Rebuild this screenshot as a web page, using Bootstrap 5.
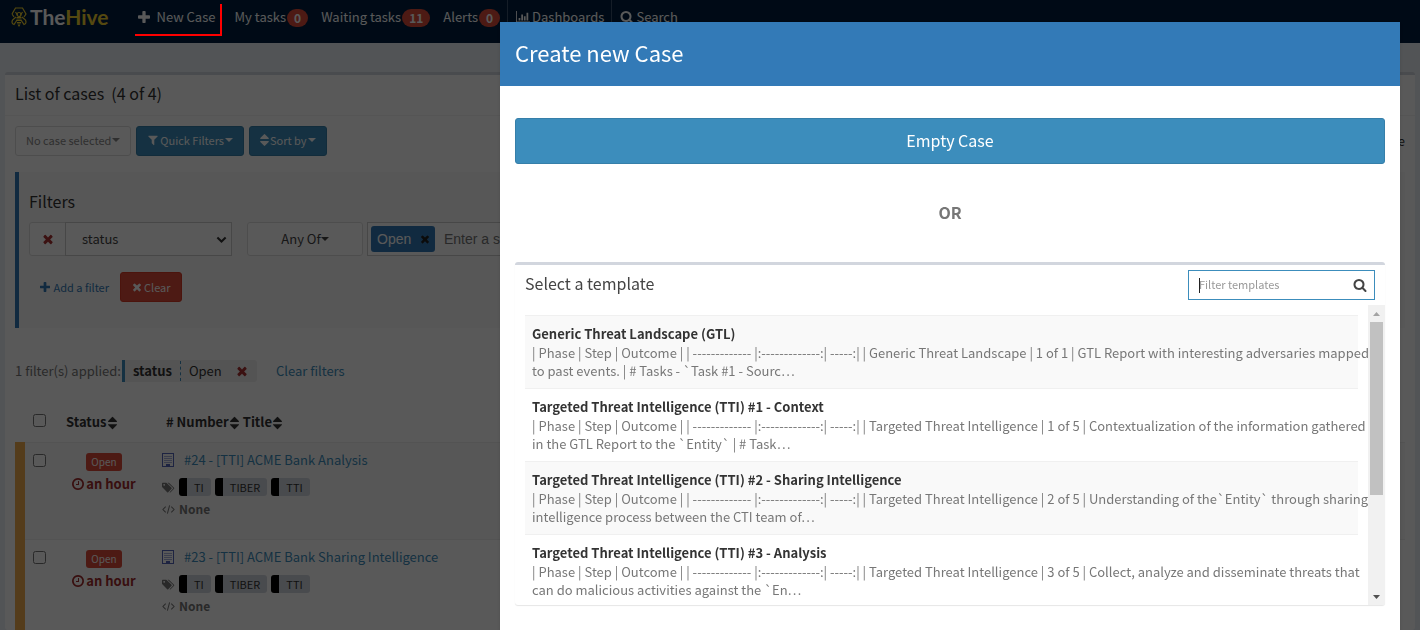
<!DOCTYPE html>
<html lang="en">
<head>
<meta charset="utf-8">
<meta name="viewport" content="width=device-width, initial-scale=1">
<title>TheHive</title>
<link rel="stylesheet" href="https://cdn.jsdelivr.net/npm/bootstrap@5.3.0/dist/css/bootstrap.min.css">
<style>
:root { --hive-blue: #3c8dbc; --hive-red: #dd4b39; --hive-grey: #d2d6de; }
body { font-family: "Noto Sans CJK SC", "Liberation Sans", sans-serif; font-size: 13px; line-height: 20px; color: #333; background: #ecf0f5; height: 100vh; overflow: hidden; }
a { text-decoration: none; color: var(--hive-blue); }
.ico { width: 14px; height: 14px; fill: currentColor; flex: none; }
.ico-s { width: 12px; height: 12px; }
.ico-sort { width: 9px; margin-left: 1px; }
.caret { width: 0; height: 0; border: 4px solid transparent; border-top-color: currentColor; border-bottom: 0; flex: none; }

/* top bar */
.topbar { height: 43px; background: #001f3f; padding: 0 10px; color: #fff; flex: none; }
.topbar a { color: #fff; height: 33px; gap: 1px; margin-left: 13px; }
.topbar a.brand { margin-left: 0; gap: 2px; }
.bee { width: 18px; height: 20px; color: #f3d12f; }
.logo-text { font: 700 21px/24px Lato, sans-serif; color: #fff; }
.logo-text span { color: #f3d12f; }
.count { background: var(--hive-red); border-radius: 10px; font-size: 12px; font-weight: 700; line-height: 18px; padding: 0 7px; margin-top: 2px; }
.topbar a.new-case { position: relative; width: 87px; gap: 7px; padding-left: 3px; margin-left: 26px; }
.new-case::after { content: ""; position: absolute; inset: 4px 0 -3px 0; border: solid #f00; border-width: 0 2px 2px 0; z-index: 1060; }
.topbar a.divided { border-left: 1px solid #3c5570; padding-left: 8px; margin-left: 7px; gap: 2px; }

/* list of cases */
.panel-box { background: #fff; border-top: 3px solid var(--hive-grey); border-radius: 3px; }
.heading { font-size: 16px; line-height: 24px; font-weight: 400; margin: 0; }
.list-box { margin: 29px 5px 0; flex: 1; min-height: 0; overflow: hidden; }
.list-head { padding: 6px 10px 10px; border-bottom: 1px solid #f4f4f4; }
.list-body { padding: 10px; }
.toolbar { gap: 5px; }
.tool { font-size: 11px; line-height: 18px; padding: 5px 10px; border-radius: 3px; gap: 1px; border: 1px solid #367fa9; color: #fff; background: var(--hive-blue); }
.toolbar .tool { padding: 4px 10px 6px; }
.tool-idle { background: #fff; border-color: #ddd; color: #888; }
.toolbar .tool-idle { background: #fff; border-color: #ddd; }
.tool-danger { background: var(--hive-red); border-color: #d73925; }
.tool-link { color: #337ab7; background: none; border-color: transparent; }
.filters { border-left: 4px solid #337ab7; background: #f9f9f9; padding: 17px 10px 26px; margin-top: 16px; }
.filter-row { margin-top: 9px; height: 34px; }
.cell { border: 1px solid #ddd; background: #fff; height: 34px; }
.cross { color: #a33; }
.remove { width: 37px; border-radius: 3px 0 0 3px; }
.field { width: 167px; margin-left: -1px; border: 1px solid #ccc; border-radius: 0; padding: 0 30px 0 16px; font-size: 13px; color: #444; background-color: #fff; background-position: right 4px center; background-size: 11px; background-image: url("data:image/svg+xml,%3csvg xmlns='http://www.w3.org/2000/svg' viewBox='0 0 16 16'%3e%3cpath fill='none' stroke='%23333' stroke-width='3' d='M2 5l6 6 6-6'/%3e%3c/svg%3e"); }
.match { width: 116px; margin-left: 15px; border-radius: 3px; font-size: 13px; color: #444; }
.tag-box { margin-left: 4px; flex: 1; border-color: #ccc; padding: 3px; gap: 9px; font-family: "Liberation Sans", sans-serif; font-size: 14px; }
.tag-open { background: #337ab7; color: #fff; border-radius: 3px; padding: 0 4px 0 6px; height: 26px; width: 64px; }
.tag-open .ico { width: 12px; color: #222; }
.tag-box input { border: 0; width: 160px; background: none; padding: 0; }
.applied { margin-top: 32px; height: 22px; color: #777; }
.chip { background: #f0f0f0; border-left: 3px solid var(--hive-blue); border-radius: 0 3px 3px 0; height: 22px; width: 135px; margin: 0 19px 0 1px; color: #333; }
.chip b { padding: 0 8px; border-right: 1px dashed var(--hive-blue); }
.cases { margin: 22px 0 0; font-size: 13px; --bs-table-striped-bg: #f9f9f9; --bs-table-color: #333; }
.cases th, .cases td { padding: 7px 8px 20px; border-bottom: 1px solid #eee; }
.cases th { padding: 8px 8px 10px; line-height: 20px; }
.cases td:last-child { padding-left: 12px; }
.cases th:last-child { padding-left: 16px; }
.cases tbody td:first-child { border-left: 10px solid #f0ad4e; }
.cases input { width: 13px; height: 13px; display: block; margin: 4px 0 0; }
.cases thead input { margin: 0 0 5px 5px; }
.c-check { width: 38px; } .c-status { width: 92px; }
.status { background: var(--hive-red); color: #fff; font-size: 10px; line-height: 18px; border-radius: 3px; padding: 0 5px; margin-top: 3px; }
.age { color: #a22c2c; font-weight: 700; gap: 2px; line-height: 20px; margin-top: 3px; white-space: nowrap; }
.case-title { gap: 10px; }
.building { width: 12px; color: #5566bb; }
.case-tag { background: var(--hive-grey); border-left: 8px solid #000; border-radius: 3px; font-size: 11px; line-height: 18px; padding: 0 7px; color: #333; }
.meta { color: #777; gap: 4px; font-size: 12px; margin-top: 3px; }
.meta .ico { width: 13px; height: 13px; }
.tag-row { margin-top: 8px; }

/* dialog */
.backdrop { background: #000; opacity: .65; z-index: 1050; }
.sheet { position: absolute; top: 22px; right: 20px; bottom: 0; width: 900px; max-width: 95vw; background: #fff; z-index: 1055; box-shadow: 0 2px 3px rgba(0,0,0,.12); }
.sheet-head { background: #337ab7; color: #fff; padding: 18px 15px 22px; }
.sheet-head h4 { font-size: 22px; line-height: 24px; margin: 0; font-weight: 400; }
.sheet-body { padding: 32px 15px 0; }
.empty-case { background: var(--hive-blue); border: 1px solid #367fa9; color: #fff; border-radius: 3px; font-size: 16px; line-height: 24px; padding: 9px 10px 11px; }
.or { font-size: 16px; line-height: 24px; font-weight: 700; color: #777; margin: 36px 0 38px; }
.tpl-box { box-shadow: 0 1px 1px rgba(0,0,0,.1); }
.tpl-head { height: 40px; padding: 0 10px; color: #444; }
.tpl-head .heading { padding-bottom: 4px; }
.tpl-search { width: 187px; height: 30px; border: 1px solid var(--hive-blue); padding: 0 7px 0 10px; }
.tpl-search input { border: 0; outline: 0; padding: 0 0 2px; font-size: 11px; line-height: 18px; min-width: 0; flex: 1; }
.tpl-search input::placeholder { color: #999; }
.cursor { width: 1px; height: 15px; background: #222; margin-right: -1px; z-index: 1; }
.tpl-scroll { height: 300px; overflow: hidden; }
.tpl-list { padding: 10px 10px 0; min-width: 0; }
.tpl { border-top: 1px solid #f0f0f0; padding: 8px 7px; line-height: 18px; color: #777; white-space: nowrap; }
.tpl:nth-child(odd) { background: #f9f9f9; }
.tpl b { display: block; line-height: 19px; margin-bottom: 1px; color: #333; }
.rail { width: 17px; background: #f1f1f1; }
.rail i { width: 13px; height: 173px; background: #c1c1c1; }
.rail svg { width: 17px; height: 17px; }
</style>
</head>
<body class="d-flex flex-column">
<svg class="d-none" xmlns="http://www.w3.org/2000/svg">
  <symbol id="plus" viewBox="192 128 1408 1408"><path d="M1600 736v192q0 40-28 68t-68 28h-416v416q0 40-28 68t-68 28h-192q-40 0-68-28t-28-68v-416h-416q-40 0-68-28t-28-68v-192q0-40 28-68t68-28h416v-416q0-40 28-68t68-28h192q40 0 68 28t28 68v416h416q40 0 68 28t28 68z"/></symbol>
  <symbol id="times" viewBox="0 0 1792 1792"><path d="M1490 1322q0 40-28 68l-136 136q-28 28-68 28t-68-28l-294-294-294 294q-28 28-68 28t-68-28l-136-136q-28-28-28-68t28-68l294-294-294-294q-28-28-28-68t28-68l136-136q28-28 68-28t68 28l294 294 294-294q28-28 68-28t68 28l136 136q28 28 28 68t-28 68l-294 294 294 294q28 28 28 68z"/></symbol>
  <symbol id="search" viewBox="0 0 1792 1792"><path d="M1216 832q0-185-131.5-316.5t-316.5-131.5-316.5 131.5-131.5 316.5 131.5 316.5 316.5 131.5 316.5-131.5 131.5-316.5zm512 832q0 52-38 90t-90 38q-54 0-90-38l-343-342q-179 124-399 124-143 0-273.5-55.5t-225-150-150-225-55.5-273.5 55.5-273.5 150-225 225-150 273.5-55.5 273.5 55.5 225 150 150 225 55.5 273.5q0 220-124 399l343 343q37 37 37 90z"/></symbol>
  <symbol id="filter" viewBox="0 0 1792 1792"><path d="M1595 295q17 41-14 70l-493 493v742q0 42-39 59-13 5-25 5-27 0-45-19l-256-256q-19-19-19-45v-486l-493-493q-31-29-14-70 17-39 59-39h1280q42 0 59 39z"/></symbol>
  <symbol id="sort" viewBox="384 192 1024 1408"><path d="M1408 1088q0 26-19 45l-448 448q-19 19-45 19t-45-19l-448-448q-19-19-19-45t19-45 45-19h896q26 0 45 19t19 45zm0-384q0 26-19 45t-45 19h-896q-26 0-45-19t-19-45 19-45l448-448q19-19 45-19t45 19l448 448q19 19 19 45z"/></symbol>
  <symbol id="clock" viewBox="128 128 1536 1536"><path d="M1024 544v448q0 14-9 23t-23 9h-320q-14 0-23-9t-9-23v-64q0-14 9-23t23-9h224v-352q0-14 9-23t23-9h64q14 0 23 9t9 23zm416 352q0-148-73-273t-198-198-273-73-273 73-198 198-73 273 73 273 198 198 273 73 273-73 198-198 73-273zm224 0q0 209-103 385.5t-279.5 279.5-385.5 103-385.5-103-279.5-279.5-103-385.5 103-385.5 279.5-279.5 385.5-103 385.5 103 279.5 279.5 103 385.5z"/></symbol>
  <symbol id="chart" viewBox="0 0 16 14"><path d="M0 0h1v12h15v1H0zM3 8h2v3H3zM6 4h2v7H6zM9 6h2v5H9zM12 2h2v9h-2z"/></symbol>
  <symbol id="building" viewBox="0 0 12 14"><path fill-rule="evenodd" d="M0 0h12v14H0zM1 1v12h3v-2h4v2h3V1z"/><path d="M2.500 3.500h7M2.500 5.500h7M2.500 7.500h7M2.500 9.500h7" stroke="currentColor" stroke-dasharray="1 1"/></symbol>
  <symbol id="tags" viewBox="0 0 14 12"><path fill-rule="evenodd" d="M0 1.500Q0 1 .6 1H4.500Q5 1 5.600 1.600L10.300 6.300Q10.800 6.900 10.300 7.400L6.700 11Q6.100 11.500 5.600 11L.6 6Q0 5.400 0 4.800zM2.300 2.300a.9.9 0 1 0 .01 0z"/><path d="M6 1h1.200Q7.800 1 8.300 1.600L13 6.300Q13.500 6.900 13 7.400L9.300 11.200Q8.700 11.600 8.200 11L12 7.100Q12.300 6.800 12 6.500z"/></symbol>
  <symbol id="code" viewBox="0 0 14 12"><path d="M4 3L1 6l3 3M10 3l3 3-3 3M8.200 1.500L5.800 10.500" fill="none" stroke="currentColor" stroke-width="1.100"/></symbol>
  <symbol id="bee" viewBox="0 0 16 20"><g fill="none" stroke="currentColor" stroke-width="1.200"><path d="M1 7L4.500 1h7L15 7l-2 3M1 7l2 3M6.500 8L4.500 5M9.500 8l2-3M5 10L1.500 13q-1.500 3.500 1.500 4.500L6 13M11 10l3.500 3q1.500 3.500-1.500 4.500L10 13"/><circle cx="8" cy="7.500" r="2"/></g><path d="M5.500 10h5v1.500h-5zM5.500 12.500h5V14h-5zM5.800 15h4.400l-.4 1.500H6.200zM6.500 17.500h3L8 20z"/></symbol>
</svg>

<nav class="topbar d-flex align-items-start" aria-label="Main">
  <a class="brand d-flex align-items-center" href="#"><svg class="bee ico"><use href="#bee"/></svg><span class="logo-text">The<span>Hive</span></span></a>
  <a class="new-case d-flex align-items-center" href="#"><svg class="ico ico-s"><use href="#plus"/></svg>New Case</a>
  <a class="d-flex align-items-center" href="#">My tasks <span class="count">0</span></a>
  <a class="d-flex align-items-center" href="#">Waiting tasks <span class="count">11</span></a>
  <a class="d-flex align-items-center" href="#">Alerts <span class="count">0</span></a>
  <a class="divided d-flex align-items-center" href="#"><svg class="ico"><use href="#chart"/></svg>Dashboards</a>
  <a class="divided d-flex align-items-center" href="#"><svg class="ico"><use href="#search"/></svg>Search</a>
</nav>

<main class="list-box panel-box">
  <div class="list-head"><h3 class="heading">List of cases &nbsp;(4 of 4)</h3></div>
  <div class="list-body">
    <div class="toolbar d-flex align-items-center">
      <button class="tool tool-idle d-flex align-items-center" disabled>No case selected <span class="caret"></span></button>
      <button class="tool d-flex align-items-center"><svg class="ico ico-s"><use href="#filter"/></svg>Quick Filters<span class="caret"></span></button>
      <button class="tool d-flex align-items-center"><svg class="ico ico-s ico-sort m-0"><use href="#sort"/></svg>Sort by <span class="caret"></span></button>
      <span class="ms-auto">per page</span>
    </div>
    <section class="filters">
      <h4 class="heading">Filters</h4>
      <div class="filter-row d-flex">
        <button class="cell remove cross d-flex align-items-center justify-content-center" aria-label="Remove filter"><svg class="ico"><use href="#times"/></svg></button>
        <select class="form-select field" aria-label="Field"><option>status</option></select>
        <button class="cell match d-flex align-items-center justify-content-center">Any Of<span class="caret"></span></button>
        <div class="cell tag-box d-flex align-items-center"><span class="tag-open d-flex align-items-center justify-content-between">Open <svg class="ico"><use href="#times"/></svg></span><input type="text" placeholder="Enter a status" aria-label="Status"></div>
      </div>
      <div class="d-flex align-items-center mt-3">
        <a href="#" class="tool tool-link d-flex align-items-center"><svg class="ico" style="width:10px"><use href="#plus"/></svg>&nbsp;Add a filter</a>
        <button class="tool tool-danger d-flex align-items-center"><svg class="ico ico-s"><use href="#times"/></svg>Clear</button>
      </div>
    </section>
    <div class="applied d-flex align-items-center">1 filter(s) applied:
      <span class="chip d-flex align-items-center"><b>status</b><span class="ps-2">Open</span><svg class="ico cross ms-auto me-2"><use href="#times"/></svg></span>
      <a href="#">Clear filters</a></div>
    <table class="cases table table-striped">
      <thead><tr><th class="c-check"><input type="checkbox" aria-label="Select all"></th><th class="c-status">Status<svg class="ico ico-sort"><use href="#sort"/></svg></th><th># Number<svg class="ico ico-sort me-1"><use href="#sort"/></svg>Title<svg class="ico ico-sort"><use href="#sort"/></svg></th></tr></thead>
      <tbody>
        <tr><td><input type="checkbox" aria-label="Select case 24"></td>
          <td><div class="d-flex flex-column align-items-center"><span class="status">Open</span><span class="age d-flex align-items-center"><svg class="ico ico-s"><use href="#clock"/></svg>an hour</span></div></td>
          <td><div class="case-title d-flex align-items-center"><svg class="ico building"><use href="#building"/></svg><a href="#">#24 - [TTI] ACME Bank Analysis</a></div>
            <div class="meta tag-row d-flex align-items-center"><svg class="ico"><use href="#tags"/></svg><span class="case-tag">TI</span><span class="case-tag">TIBER</span><span class="case-tag">TTI</span></div>
            <div class="meta d-flex align-items-center"><svg class="ico"><use href="#code"/></svg><b>None</b></div></td></tr>
        <tr><td><input type="checkbox" aria-label="Select case 23"></td>
          <td><div class="d-flex flex-column align-items-center"><span class="status">Open</span><span class="age d-flex align-items-center"><svg class="ico ico-s"><use href="#clock"/></svg>an hour</span></div></td>
          <td><div class="case-title d-flex align-items-center"><svg class="ico building"><use href="#building"/></svg><a href="#">#23 - [TTI] ACME Bank Sharing Intelligence</a></div>
            <div class="meta tag-row d-flex align-items-center"><svg class="ico"><use href="#tags"/></svg><span class="case-tag">TI</span><span class="case-tag">TIBER</span><span class="case-tag">TTI</span></div>
            <div class="meta d-flex align-items-center"><svg class="ico"><use href="#code"/></svg><b>None</b></div></td></tr>
      </tbody>
    </table>
  </div>
</main>

<div class="backdrop position-fixed top-0 start-0 w-100 h-100"></div>
<div class="sheet" role="dialog" aria-labelledby="dlgTitle">
  <header class="sheet-head"><h4 id="dlgTitle">Create new Case</h4></header>
  <div class="sheet-body">
    <button class="empty-case w-100 d-block">Empty Case</button>
    <p class="or text-center">OR</p>
    <section class="panel-box tpl-box">
      <div class="tpl-head d-flex align-items-center justify-content-between">
        <h3 class="heading">Select a template</h3>
        <label class="tpl-search d-flex align-items-center"><span class="cursor"></span><input type="text" placeholder="Filter templates" aria-label="Filter templates"><svg class="ico"><use href="#search"/></svg></label>
      </div>
      <div class="tpl-scroll d-flex">
        <div class="tpl-list flex-fill">
          <div class="tpl"><b>Generic Threat Landscape (GTL)</b>| Phase | Step | Outcome | | ------------- |:-------------:| -----:| | Generic Threat Landscape | 1 of 1 | GTL Report with interesting adversaries mapped<br>to past events. | # Tasks - `Task #1 - Sourc…</div>
          <div class="tpl"><b>Targeted Threat Intelligence (TTI) #1 - Context</b>| Phase | Step | Outcome | | ------------- |:-------------:| -----:| | Targeted Threat Intelligence | 1 of 5 | Contextualization of the information gathered<br>in the GTL Report to the `Entity` | # Task…</div>
          <div class="tpl"><b>Targeted Threat Intelligence (TTI) #2 - Sharing Intelligence</b>| Phase | Step | Outcome | | ------------- |:-------------:| -----:| | Targeted Threat Intelligence | 2 of 5 | Understanding of the`Entity` through sharing<br>intelligence process between the CTI team of…</div>
          <div class="tpl"><b>Targeted Threat Intelligence (TTI) #3 - Analysis</b>| Phase | Step | Outcome | | ------------- |:-------------:| -----:| | Targeted Threat Intelligence | 3 of 5 | Collect, analyze and disseminate threats that<br>can do malicious activities against the `En…</div>
        </div>
        <div class="rail d-flex flex-column align-items-center" aria-hidden="true"><svg><path d="M5 11l3.500-4 3.500 4z" fill="#a3a3a3"/></svg><i></i><svg class="mt-auto"><path d="M5 7h7l-3.500 4z" fill="#505050"/></svg></div>
      </div>
    </section>
  </div>
</div>
<script src="https://cdn.jsdelivr.net/npm/bootstrap@5.3.0/dist/js/bootstrap.bundle.min.js"></script>
</body>
</html>
